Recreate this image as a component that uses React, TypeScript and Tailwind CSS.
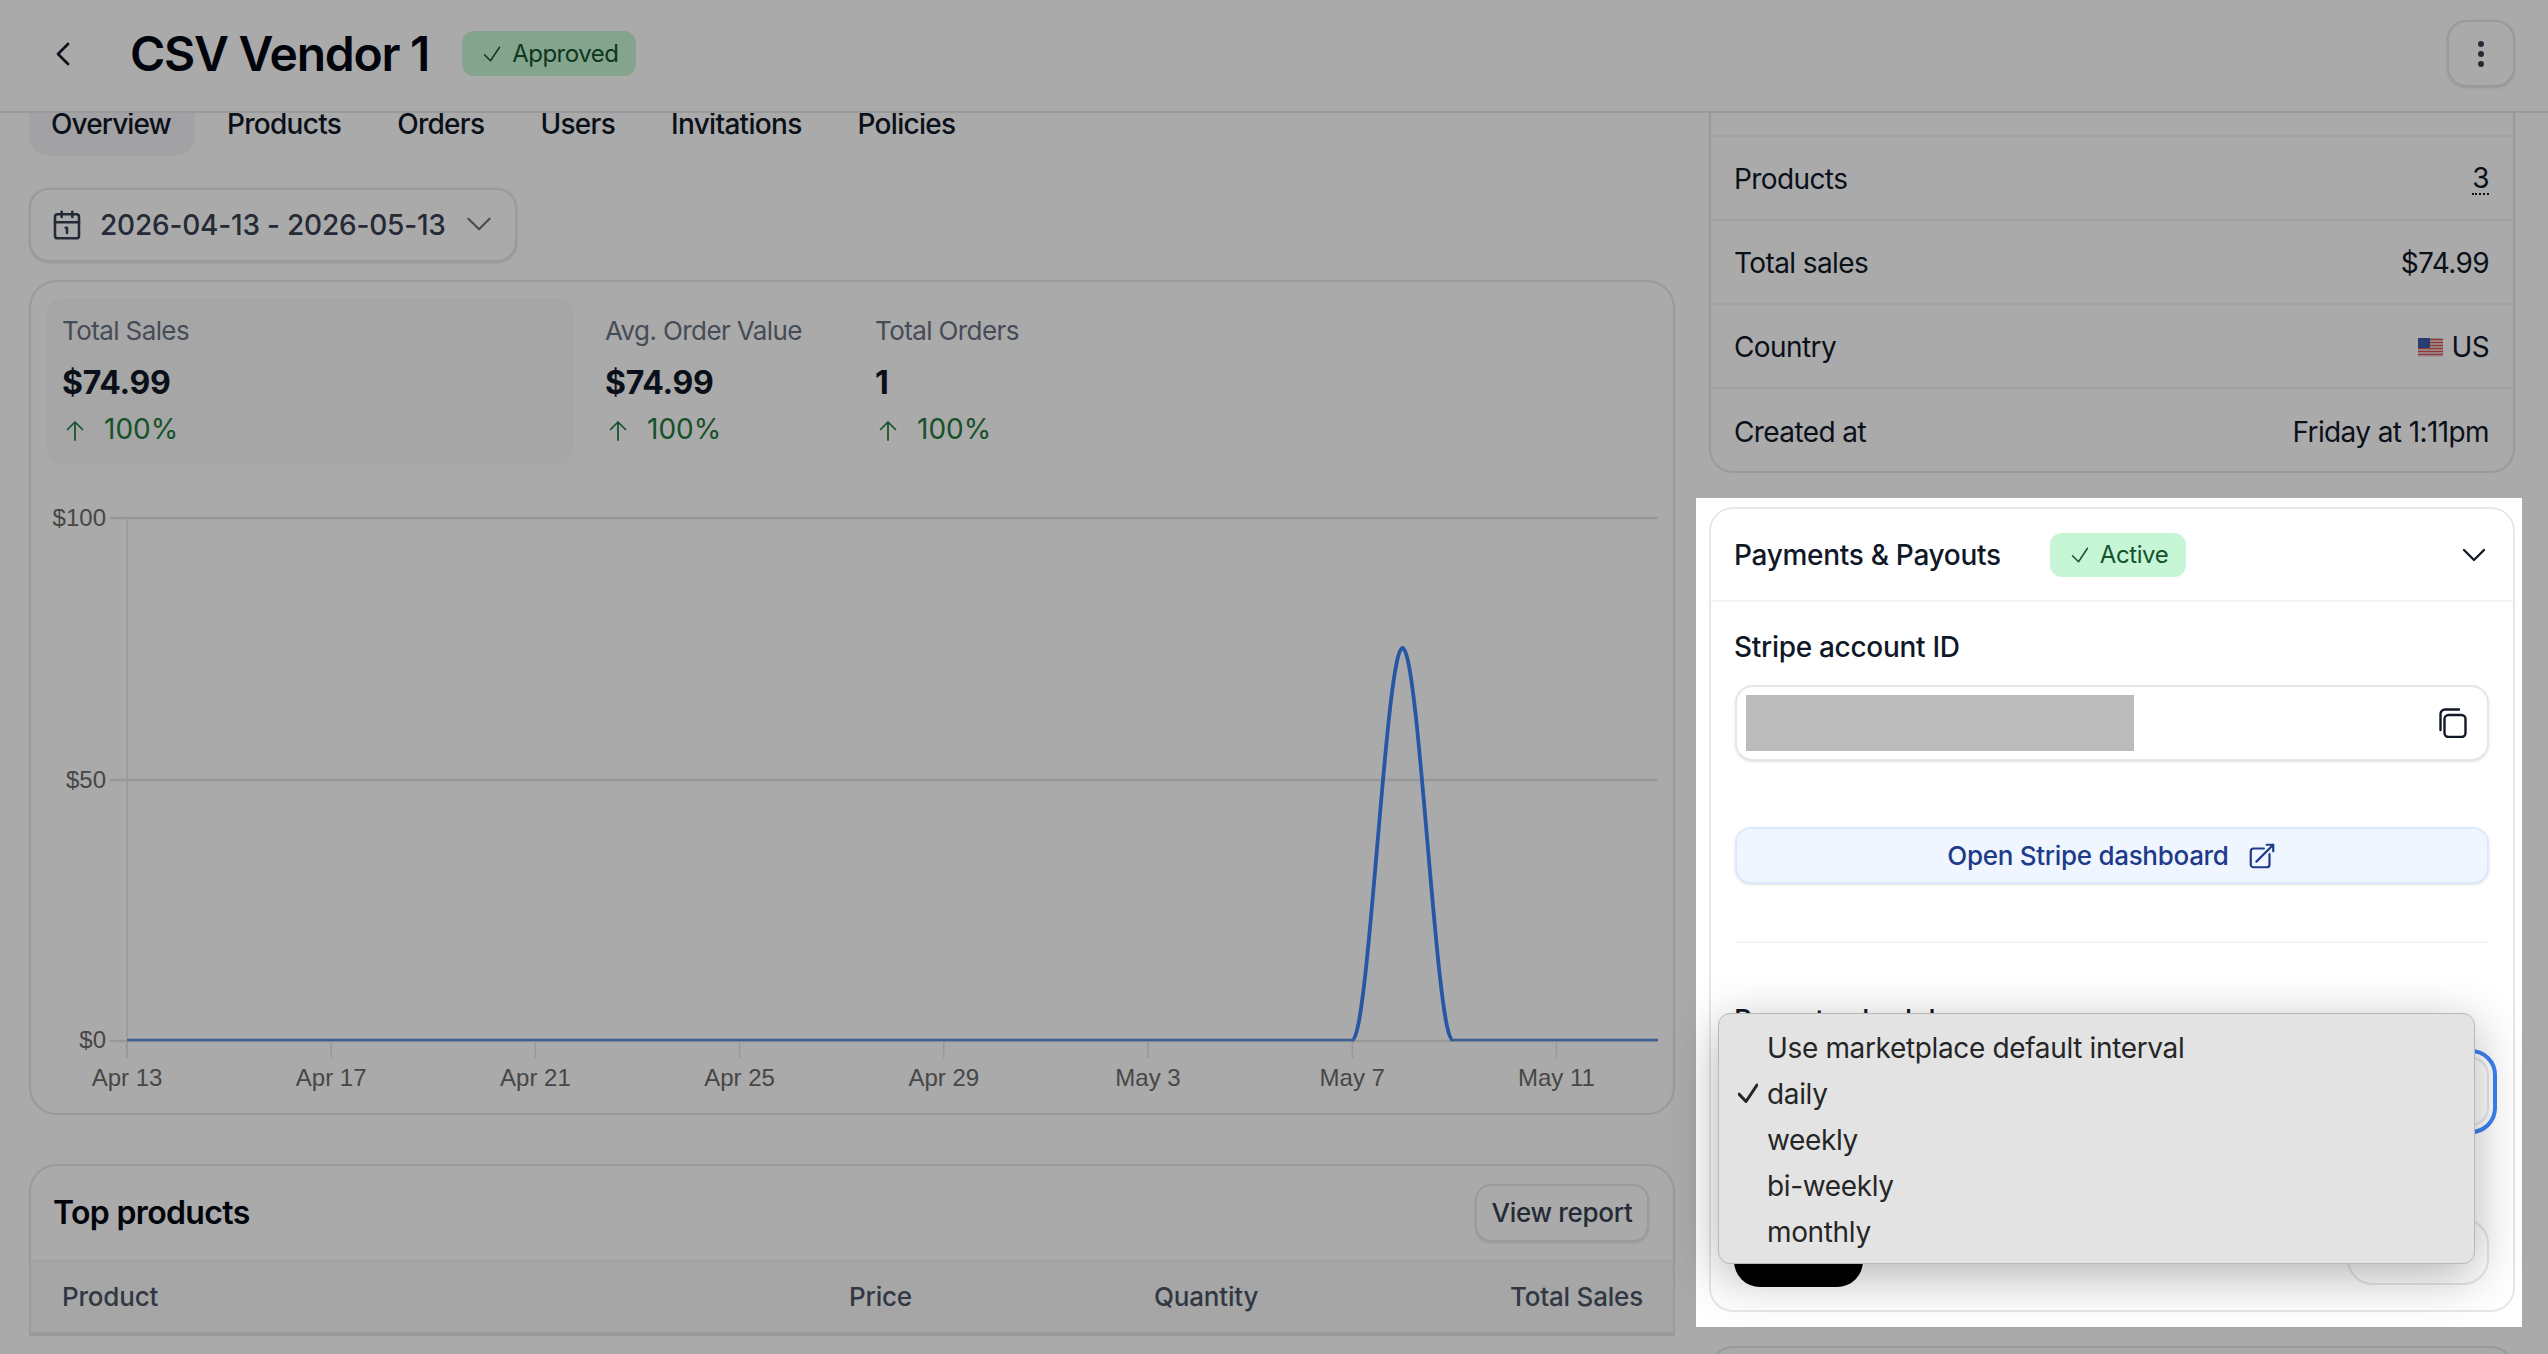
import React from "react";
import { Calendar1 } from "lucide-react";

const font = { fontFamily: "Inter, 'Noto Sans', sans-serif" };

function Check({ className = "" }: { className?: string }) {
  return (
    <svg viewBox="0 0 24 24" width="24" height="24" fill="none" stroke="currentColor" strokeWidth="1.5" strokeLinecap="round" strokeLinejoin="round" className={className}>
      <path d="m4.5 12.75 6 6 9-13.5" />
    </svg>
  );
}

function ChevronDown({ size, className = "", strokeWidth = 1.5 }: { size: number; className?: string; strokeWidth?: number }) {
  return (
    <svg viewBox="0 0 24 24" width={size} height={size} fill="none" stroke="currentColor" strokeWidth={strokeWidth} strokeLinecap="round" strokeLinejoin="round" className={className}>
      <path d="m19.5 8.25-7.5 7.5-7.5-7.5" />
    </svg>
  );
}

function Stat({ label, value, className }: { label: string; value: string; className: string }) {
  return (
    <div className={`rounded-[16px] pl-[15px] pt-[13px] ${className}`}>
      <div className="text-[26px] leading-[40px] tracking-[-0.6px] text-gray-500">{label}</div>
      <div className="mt-[10px] text-[32px] leading-[44px] font-bold tracking-[-0.25px] text-gray-900">{value}</div>
      <div className="mt-[4px] flex items-center text-[28px] leading-[40px] text-[#237a3e]">
        <svg viewBox="0 0 24 24" width="24" height="24" fill="none" stroke="currentColor" strokeWidth="1.75" strokeLinecap="round" strokeLinejoin="round" className="ml-[1px] mr-[17px] mt-[3px] shrink-0">
          <path d="M4.5 10.5 12 3m0 0 7.5 7.5M12 3v18" />
        </svg>
        100%
      </div>
    </div>
  );
}

const ticks: [number, string][] = [
  [127, "Apr 13"],
  [331.2, "Apr 17"],
  [535.4, "Apr 21"],
  [739.6, "Apr 25"],
  [943.8, "Apr 29"],
  [1148, "May 3"],
  [1352.3, "May 7"],
  [1556.5, "May 11"],
];

function Chart() {
  const label = { fontFamily: "'Liberation Sans', Arial, sans-serif", fontSize: 24, fill: "#6b6b6b" };
  return (
    <svg viewBox="31 500 1642 600" className="mt-[35px] block h-[600px] w-[1642px]">
      {[518, 780, 1041].map((y) => (
        <line key={y} x1="110" x2="1658" y1={y} y2={y} stroke="#e5e5e5" strokeWidth="2.5" />
      ))}
      <line x1="127" x2="127" y1="518" y2="1058" stroke="#e5e5e5" strokeWidth="1.5" />
      {ticks.map(([x, t]) => (
        <g key={t}>
          <line x1={x} x2={x} y1="1040" y2="1058" stroke="#e5e5e5" strokeWidth="1.5" />
          <text x={x} y="1086" textAnchor="middle" style={label}>{t}</text>
        </g>
      ))}
      <text x="106" y="526" textAnchor="end" style={label}>$100</text>
      <text x="106" y="788" textAnchor="end" style={label}>$50</text>
      <text x="106" y="1048" textAnchor="end" style={label}>$0</text>
      <path d="M127 1040H1352.3M1452.7 1040H1658" fill="none" stroke="#5b8fe0" strokeWidth="2.5" />
      <path
        d="M1352.3 1040C1369 1040 1385.8 648 1402.5 648C1419.2 648 1436 1040 1452.7 1040"
        fill="none"
        stroke="#3b82f6"
        strokeWidth="3.8"
      />
    </svg>
  );
}

function InfoRow({ label, children, last }: { label: string; children: React.ReactNode; last?: boolean }) {
  return (
    <div className={`flex h-[84px] items-center justify-between pl-[23px] pr-[24px] pt-[2px] text-[28px] tracking-[-0.6px] text-gray-900 ${last ? "" : "border-b-2 border-gray-100"}`}>
      <span>{label}</span>
      {children}
    </div>
  );
}

export default function App() {
  return (
    <div style={font} className="relative flex h-[1354px] w-[2548px] flex-col overflow-hidden bg-white">
      <header className="relative z-[1] flex h-[113px] shrink-0 items-center border-b-2 border-gray-200 bg-white pb-[4px]">
        <svg viewBox="0 0 24 24" width="32" height="32" fill="none" stroke="#111827" strokeWidth="2" strokeLinecap="round" strokeLinejoin="round" className="ml-[47px]">
          <path d="M15.75 19.5 8.25 12l7.5-7.5" />
        </svg>
        <h1 className="ml-[51px] text-[48px] leading-[60px] font-semibold tracking-[-1.25px] text-gray-950">CSV Vendor 1</h1>
        <span className="ml-[33px] flex h-[45px] items-center rounded-[12px] bg-[#c6f6d5] px-[18px] text-[24px] font-normal tracking-[-0.5px] text-[#14532d]">
          <Check className="mr-[8px]" />
          Approved
        </span>
        <button className="ml-auto mr-[33px] flex h-[67px] w-[68px] items-center justify-center rounded-[20px] border-2 border-gray-200 bg-white shadow-sm">
          <svg viewBox="0 0 8 28" width="8" height="28" fill="#374151">
            <circle cx="4" cy="4" r="3" />
            <circle cx="4" cy="14" r="3" />
            <circle cx="4" cy="24" r="3" />
          </svg>
        </button>
      </header>

      <main className="flex min-h-0 flex-1 overflow-hidden pl-[29px]">
        <section className="-mt-[29px] w-[1646px] shrink-0">
          <nav className="flex gap-[8px] text-[28px] font-medium tracking-[-0.7px] text-gray-900">
            <span className="flex h-[72px] items-center rounded-[20px] bg-gray-100 pl-[22px] pr-[24px] pt-[8px] tracking-[-0.9px]">Overview</span>
            <span className="flex h-[72px] items-center px-[24px] pt-[8px]">Products</span>
            <span className="flex h-[72px] items-center px-[24px] pt-[8px]">Orders</span>
            <span className="flex h-[72px] items-center px-[24px] pt-[8px]">Users</span>
            <span className="flex h-[72px] items-center px-[24px] pt-[8px]">Invitations</span>
            <span className="flex h-[72px] items-center px-[24px] pt-[8px]">Policies</span>
          </nav>

          <button className="mt-[32px] flex h-[74px] w-[488px] items-center rounded-[20px] border-2 border-gray-200 bg-white pl-[20px] text-gray-700 shadow-sm">
            <Calendar1 size={32} strokeWidth={1.9} className="shrink-0" />
            <span className="ml-[17px] whitespace-nowrap text-[28px] font-medium tracking-[-0.2px]">2026-04-13 - 2026-05-13</span>
            <ChevronDown size={34} className="ml-[16px] -mt-[2px] shrink-0 text-gray-500" />
          </button>

          <div className="mt-[18px] h-[835px] rounded-[28px] border-2 border-gray-200 bg-white pt-[16px]">
            <div className="ml-[16px] flex">
              <Stat label="Total Sales" value="$74.99" className="h-[167px] w-[526px] bg-gray-50" />
              <Stat label="Avg. Order Value" value="$74.99" className="ml-[17px] h-[167px] w-[270px]" />
              <Stat label="Total Orders" value="1" className="h-[167px] w-[271px]" />
            </div>
            <Chart />
          </div>

          <div className="mt-[49px] rounded-t-[28px] border-2 border-gray-200 bg-white">
            <div className="flex h-[94px] items-center justify-between pl-[22px] pr-[24px]">
              <h2 className="text-[32px] font-semibold tracking-[-0.65px] text-gray-950">Top products</h2>
              <button className="flex h-[58px] w-[174px] items-center justify-center rounded-[16px] border-2 border-gray-200 pb-[2px] text-[26px] font-medium tracking-[-0.3px] text-gray-700 shadow-sm">View report</button>
            </div>
            <div className="flex h-[74px] items-center border-b-2 border-t-2 border-b-gray-200 border-t-gray-100 bg-gray-50 pb-[2px] pl-[31px] pr-[30px] text-[26px] font-medium tracking-[-0.2px] text-gray-600">
              <span className="w-[787px]">Product</span>
              <span className="w-[305px]">Price</span>
              <span>Quantity</span>
              <span className="ml-auto">Total Sales</span>
            </div>
          </div>
        </section>

        <aside className="relative ml-[34px] w-[806px] shrink-0">
          <div className="-mt-[30px] h-[390px] rounded-b-[24px] border-x-2 border-b-2 border-gray-200">
            <div className="h-[54px] border-b-2 border-gray-100" />
            <InfoRow label="Products">
              <span className="border-b-2 border-dotted border-gray-900 leading-[30px]">3</span>
            </InfoRow>
            <InfoRow label="Total sales"><span>$74.99</span></InfoRow>
            <InfoRow label="Country">
              <span className="flex items-center">
                <svg viewBox="0 0 25 19" width="25" height="19" className="mr-[8px]">
                  <rect width="25" height="19" rx="1.5" fill="#e5e7eb" />
                  <path d="M0 1.5h25M0 4.5h25M0 7.5h25M0 10.5h25M0 13.5h25M0 16.5h25" stroke="#e2504c" strokeWidth="1.5" />
                  <rect width="12" height="10" fill="#3b5fa8" />
                </svg>
                US
              </span>
            </InfoRow>
            <InfoRow label="Created at" last><span>Friday at 1:11pm</span></InfoRow>
          </div>

          <div className="relative z-20 -ml-[13px] -mr-[7px] mt-[25px] bg-white pb-[15px] pl-[13px] pr-[7px] pt-[9px]">
            <div className="flex h-[805px] flex-col rounded-[24px] border-2 border-gray-200 bg-white">
              <div className="flex h-[93px] shrink-0 items-center border-b-2 border-gray-100 pl-[23px] pr-[24px]">
                <span className="text-[28px] font-medium tracking-[-0.3px] text-gray-900">Payments &amp; Payouts</span>
                <span className="ml-[49px] flex h-[44px] items-center rounded-[12px] bg-[#c6f6d5] px-[18px] text-[24px] font-normal tracking-[-0.4px] text-[#14532d]">
                  <Check className="mr-[8px]" />
                  Active
                </span>
                <ChevronDown size={32} strokeWidth={1.75} className="ml-auto mr-[-1px] text-gray-900" />
              </div>
              <div className="flex flex-1 flex-col px-[24px]">
                <div className="-ml-[1px] mt-[25px] text-[28px] leading-[40px] font-medium tracking-[-0.3px] text-gray-900">Stripe account ID</div>
                <div className="mt-[18px] flex h-[76px] items-center justify-between rounded-[18px] border-2 border-gray-200 bg-white pl-[9px] pr-[20px] shadow-sm">
                  <div className="h-[56px] w-[388px] bg-[#bcbcbc]" />
                  <svg viewBox="0 0 28 30" width="28" height="30" fill="none" stroke="#111827" strokeWidth="2.4" strokeLinecap="round">
                    <rect x="5.5" y="7" width="21" height="22" rx="4" />
                    <path d="M20 1.5H6A4.5 4.5 0 0 0 1.5 6V22" />
                  </svg>
                </div>
                <button className="mt-[66px] flex h-[57px] items-center justify-center rounded-[16px] border-2 border-blue-100 bg-blue-50 text-[26px] font-medium tracking-[-0.3px] text-[#1e3a8a] shadow-sm">
                  Open Stripe dashboard
                  <svg viewBox="0 0 24 24" width="30" height="30" fill="none" stroke="currentColor" strokeWidth="1.75" strokeLinecap="round" strokeLinejoin="round" className="ml-[18px]">
                    <path d="M13.5 6H5.25A2.25 2.25 0 0 0 3 8.25v10.5A2.25 2.25 0 0 0 5.25 21h10.5A2.25 2.25 0 0 0 18 18.75V10.5m-10.5 6L21 3m0 0h-5.25M21 3v5.25" />
                  </svg>
                </button>
                <div className="mt-[57px] h-[2px] shrink-0 bg-gray-100" />
                <div className="-ml-[1px] mt-[57px] text-[28px] leading-[40px] font-medium tracking-[-0.3px] text-gray-900">Payout schedule</div>
                <div className="mt-[17px] flex h-[69px] items-center rounded-[18px] border-2 border-gray-200 bg-white pl-[20px] text-[28px] text-gray-900 outline-[4px] outline-offset-[4px] outline-[#3b82f6]">daily</div>
                <div className="mt-[92px] flex items-start justify-between">
                  <button className="-ml-[1px] h-[69px] w-[129px] rounded-[26px] bg-black pb-[16px] text-[26px] font-medium text-white">Save</button>
                  <button className="h-[67px] w-[142px] rounded-[26px] border-2 border-gray-200 bg-white pb-[16px] text-[26px] font-medium text-gray-700">Cancel</button>
                </div>
              </div>
            </div>

            <div className="absolute left-[22px] top-[515px] z-30 h-[251px] w-[757px] rounded-[12px] border border-[#b8b8b8] bg-[#e3e3e3] py-[11px] text-[28px] tracking-[-0.35px] text-[#262626] shadow-[0_12px_50px_rgba(0,0,0,0.3)]">
              {["Use marketplace default interval", "daily", "weekly", "bi-weekly", "monthly"].map((item) => (
                <div key={item} className="relative flex h-[46px] items-center pl-[48px]">
                  {item === "daily" && (
                    <svg viewBox="0 0 20 20" width="20" height="20" fill="none" stroke="#262626" strokeWidth="3" strokeLinecap="round" strokeLinejoin="round" className="absolute left-[19px] top-[12px]">
                      <path d="M1 11 8 18.5 19 2" />
                    </svg>
                  )}
                  {item}
                </div>
              ))}
            </div>
          </div>

          <div className="mt-[19px] h-[120px] rounded-t-[24px] border-2 border-gray-200" />
        </aside>
      </main>

      <div className="absolute inset-0 z-10 bg-black/[0.333]" />
    </div>
  );
}
